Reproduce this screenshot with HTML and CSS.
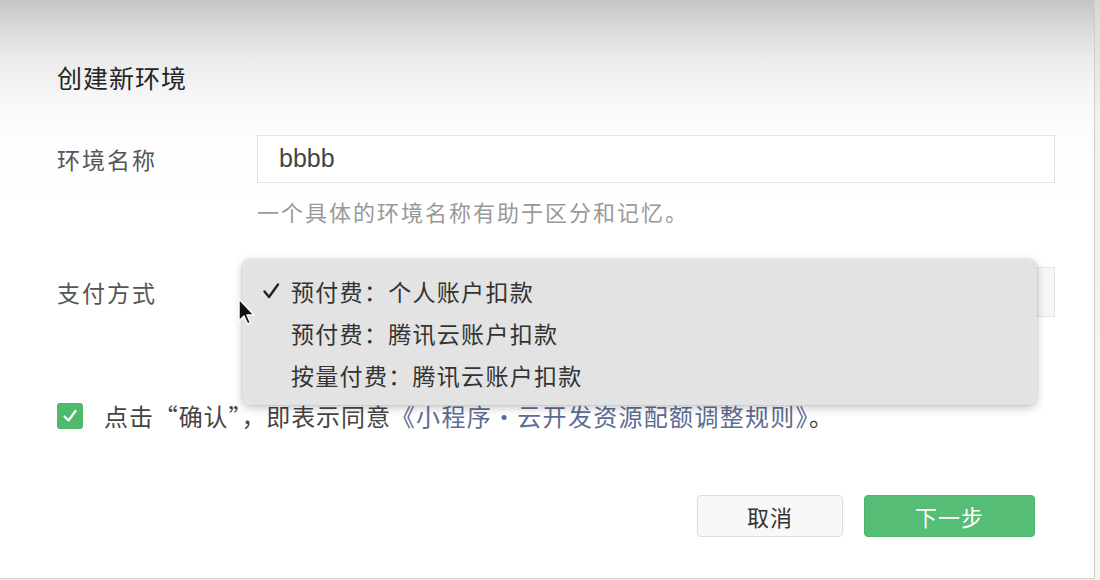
FILE: index.html
```html
<!DOCTYPE html>
<html lang="zh-CN">
<head>
<meta charset="utf-8">
<title>创建新环境</title>
<link rel="stylesheet" href="styles.css">
</head>
<body>
<div class="frame">
  <div class="dialog">
    <div class="title">创建新环境</div>
    <div class="form">
      <div class="label">环境名称</div>
      <div class="field">
        <div class="input">bbbb</div>
        <div class="hint">一个具体的环境名称有助于区分和记忆。</div>
      </div>
      <div class="label pay-label">支付方式</div>
      <div class="field pay-field">
        <div class="select"></div>
      </div>
    </div>
    <div class="agree">
      <span class="checkbox">
        <svg width="18" height="18" viewBox="0 0 18 18"><path d="M3.5 9.5 L7.5 13.5 L14.5 4" fill="none" stroke="#fff" stroke-width="2.2" stroke-linecap="round" stroke-linejoin="round"/></svg>
      </span>
      <span class="agree-text">点击“确认”，即表示同意<span class="link">《小程序·云开发资源配额调整规则》</span>。</span>
    </div>
    <div class="actions">
      <div class="btn cancel">取消</div>
      <div class="btn primary">下一步</div>
    </div>

    <div class="menu">
      <div class="item"><span class="check"><svg width="18" height="18" viewBox="0 0 18 18"><path d="M2.5 9.5 L7 15 L16 2.5" fill="none" stroke="#222" stroke-width="2.4" stroke-linecap="round" stroke-linejoin="round"/></svg></span>预付费：个人账户扣款</div>
      <div class="item"><span class="check"></span>预付费：腾讯云账户扣款</div>
      <div class="item"><span class="check"></span>按量付费：腾讯云账户扣款</div>
    </div>
    <svg class="cursor" width="20" height="32" viewBox="0 0 20 32"><path d="M2 2 L2 24 L7 19 L10.5 27 L13.5 25.6 L10 18 L17 18 Z" fill="#111" stroke="#fff" stroke-width="1.5" stroke-linejoin="round"/></svg>
  </div>
  <div class="side"></div>
</div>
</body>
</html>
```
FILE: styles.css
```css
html, body {
  margin: 0;
  padding: 0;
}
body {
  width: 1100px;
  height: 580px;
  overflow: hidden;
  background: #ececec;
  font-family: "Noto Sans CJK SC", "Liberation Sans", sans-serif;
  color: #333;
}
.frame {
  display: flex;
  height: 580px;
}
.dialog {
  position: relative;
  width: 1095px;
  height: 579px;
  box-sizing: border-box;
  padding: 60px 59px 0 57px;
  background: linear-gradient(#c4c4c4 0px, #d8d8d8 25px, #ebebeb 60px, #f8f8f8 100px, #fdfdfd 140px, #fff 200px);
  border-right: 1px solid #cdcdcd;
  border-bottom: 1px solid #d5d5d5;
}
.side {
  flex: 1;
  background: linear-gradient(#d8d8d8, #f2f2f2 120px, #f6f6f6);
}
.title {
  font-size: 25px;
  line-height: 34px;
  color: #262626;
  letter-spacing: 1px;
}
.form {
  margin-top: 41px;
  display: grid;
  grid-template-columns: 200px 798px;
}
.label {
  font-size: 23px;
  line-height: 48px;
  color: #555;
  letter-spacing: 2px;
}
.input {
  height: 48px;
  box-sizing: border-box;
  border: 1px solid #e3e3e3;
  background: #fff;
  padding-left: 21px;
  font-family: "Liberation Sans", sans-serif;
  font-size: 25px;
  line-height: 44px;
  color: #444;
}
.hint {
  margin-top: 14px;
  font-size: 22px;
  line-height: 28px;
  color: #999;
  letter-spacing: 2px;
}
.pay-label {
  margin-top: 42px;
  line-height: 50px;
}
.pay-field {
  margin-top: 42px;
}
.select {
  height: 50px;
  box-sizing: border-box;
  border: 1px solid #e3e3e3;
  background: #f6f6f6;
}
.agree {
  margin-top: 84px;
  display: flex;
  align-items: center;
  height: 30px;
}
.checkbox {
  width: 26px;
  height: 26px;
  border-radius: 3px;
  background: #4fba6c;
  display: flex;
  align-items: center;
  justify-content: center;
  margin-right: 21px;
}
.agree-text {
  font-size: 24px;
  line-height: 30px;
  color: #444;
  letter-spacing: 0.9px;
}
.link {
  color: #5d6c93;
  letter-spacing: 1.3px;
}
.actions {
  margin-top: 64px;
  display: flex;
  justify-content: flex-end;
  gap: 21px;
}
.btn {
  height: 42px;
  box-sizing: border-box;
  border-radius: 4px;
  font-size: 22px;
  line-height: 40px;
  text-align: center;
  letter-spacing: 1px;
}
.cancel {
  width: 146px;
  border: 1px solid #dcdcdc;
  background: #f8f8f8;
  color: #333;
}
.primary {
  width: 171px;
  border: 1px solid #4cb46c;
  background: #55bd76;
  color: #fff;
}
.menu {
  position: absolute;
  left: 242px;
  top: 259px;
  width: 795px;
  height: 146px;
  box-sizing: border-box;
  padding-top: 11px;
  border-radius: 8px;
  background: rgba(226, 226, 226, 0.97);
  box-shadow: 0 3px 10px rgba(0, 0, 0, 0.22), 0 0 0 1px rgba(0, 0, 0, 0.05);
}
.item {
  display: flex;
  align-items: center;
  height: 42px;
  padding-left: 20px;
  font-size: 23px;
  color: #333;
  letter-spacing: 1.3px;
}
.check {
  width: 29px;
  display: flex;
  align-items: center;
}
.cursor {
  position: absolute;
  left: 237px;
  top: 297px;
}
```
